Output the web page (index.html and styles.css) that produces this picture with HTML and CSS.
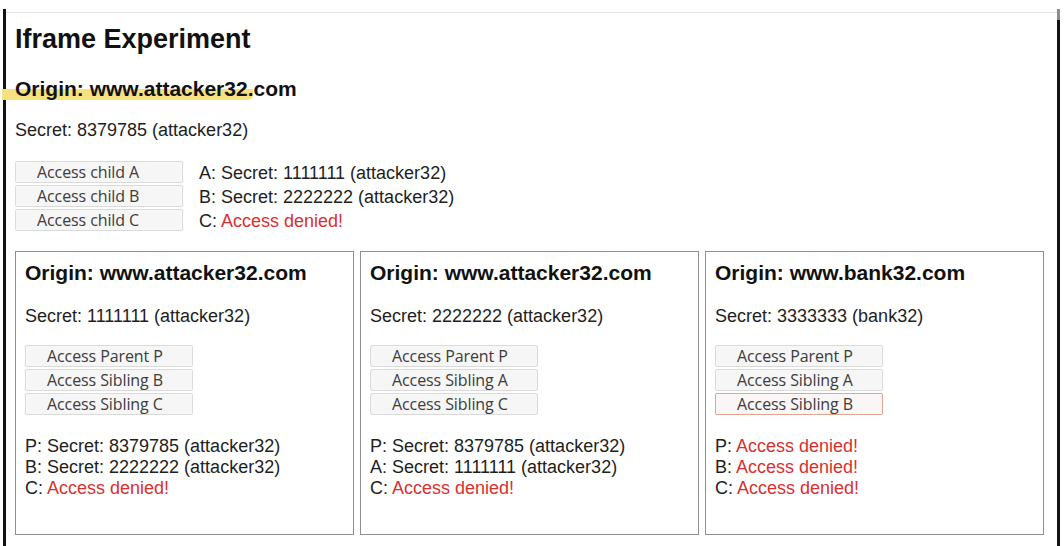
FILE: index.html
```html
<!DOCTYPE html>
<html>
<head>
<meta charset="utf-8">
<title>Iframe Experiment</title>
<link rel="stylesheet" href="styles.css">
</head>
<body>
<div class="screen">
  <div class="bar bar-left"></div>
  <div class="page">
    <h1 class="title">Iframe Experiment</h1>
    <h2 class="origin"><span class="hl">Origin: www.attacker32.</span>com</h2>
    <p class="secret">Secret: 8379785 (attacker32)</p>
    <div class="access">
      <div class="btns">
        <button class="btn">Access child A</button>
        <button class="btn">Access child B</button>
        <button class="btn">Access child C</button>
      </div>
      <div class="results">
        <div>A: Secret: 1111111 (attacker32)</div>
        <div>B: Secret: 2222222 (attacker32)</div>
        <div>C: <span class="denied">Access denied!</span></div>
      </div>
    </div>
    <div class="frames">
      <div class="frame">
        <h2 class="origin">Origin: www.attacker32.com</h2>
        <p class="secret">Secret: 1111111 (attacker32)</p>
        <div class="btns">
          <button class="btn">Access Parent P</button>
          <button class="btn">Access Sibling B</button>
          <button class="btn">Access Sibling C</button>
        </div>
        <div class="frame-results">
          <div>P: Secret: 8379785 (attacker32)</div>
          <div>B: Secret: 2222222 (attacker32)</div>
          <div>C: <span class="denied">Access denied!</span></div>
        </div>
      </div>
      <div class="frame">
        <h2 class="origin">Origin: www.attacker32.com</h2>
        <p class="secret">Secret: 2222222 (attacker32)</p>
        <div class="btns">
          <button class="btn">Access Parent P</button>
          <button class="btn">Access Sibling A</button>
          <button class="btn">Access Sibling C</button>
        </div>
        <div class="frame-results">
          <div>P: Secret: 8379785 (attacker32)</div>
          <div>A: Secret: 1111111 (attacker32)</div>
          <div>C: <span class="denied">Access denied!</span></div>
        </div>
      </div>
      <div class="frame">
        <h2 class="origin">Origin: www.bank32.com</h2>
        <p class="secret">Secret: 3333333 (bank32)</p>
        <div class="btns">
          <button class="btn">Access Parent P</button>
          <button class="btn">Access Sibling A</button>
          <button class="btn btn-focus">Access Sibling B</button>
        </div>
        <div class="frame-results">
          <div>P: <span class="denied">Access denied!</span></div>
          <div>B: <span class="denied">Access denied!</span></div>
          <div>C: <span class="denied">Access denied!</span></div>
        </div>
      </div>
    </div>
  </div>
  <div class="bar bar-right"></div>
</div>
</body>
</html>
```

FILE: styles.css
```css
html, body {
  margin: 0;
  padding: 0;
  background: #ffffff;
}

body {
  font-family: "Liberation Sans", Arial, sans-serif;
  color: #1e1e1e;
  overflow: hidden;
}

.screen {
  display: flex;
  width: 1060px;
  height: 546px;
  box-sizing: border-box;
  padding: 9px 0 0 3px;
}

.bar {
  width: 3px;
  flex: none;
  background: #121212;
}

.bar-right {
  background: linear-gradient(#8c8c8c 0 11px, #15111a 11px);
}

.page {
  flex: 1;
  margin-top: 3px;
  border-top: 1px solid #e6e6e6;
  padding-left: 9px;
}

.title {
  margin: 10px 0 0;
  font-size: 27px;
  line-height: 32px;
  font-weight: bold;
  color: #111;
}

.origin {
  margin: 22px 0 0;
  font-size: 21px;
  line-height: 24px;
  font-weight: bold;
  color: #111;
}

.hl {
  margin-left: -13px;
  padding-left: 13px;
  border-radius: 0 0 5px 0;
  background: linear-gradient(to bottom, transparent 0, transparent 52%, #f6e17f 52%, #f6e17f 98%, transparent 98%);
}

.secret {
  margin: 18px 0 0;
  font-size: 18px;
  line-height: 22px;
}

.access {
  margin-top: 20px;
  display: flex;
  gap: 16px;
}

.btns {
  display: flex;
  flex-direction: column;
  gap: 2px;
  width: 168px;
}

.btn {
  display: block;
  width: 168px;
  height: 22px;
  box-sizing: border-box;
  margin: 0;
  padding: 0 0 0 21px;
  text-align: left;
  border: 1px solid #dadada;
  border-radius: 2px;
  background: #f6f6f6;
  color: #3c3c3c;
  font-family: "Open Sans", "Noto Sans", sans-serif;
  font-size: 16px;
  line-height: 20px;
  letter-spacing: -0.1px;
}

.btn-focus {
  border: 1.5px solid #e3a491;
  background: #f9f6f5;
}

.results {
  font-size: 18px;
  line-height: 24px;
}

.denied {
  color: #d9302f;
}

.frames {
  margin-top: 18px;
  display: flex;
  gap: 6px;
}

.frame {
  width: 339px;
  height: 284px;
  box-sizing: border-box;
  border: 1px solid #8f8f8f;
  padding: 9px 9px 0;
}

.frame .origin {
  margin-top: 0;
}

.frame .secret {
  margin-top: 20px;
}

.frame .btns {
  margin-top: 18px;
}

.frame-results {
  margin-top: 21px;
  font-size: 18px;
  line-height: 21px;
}
```
